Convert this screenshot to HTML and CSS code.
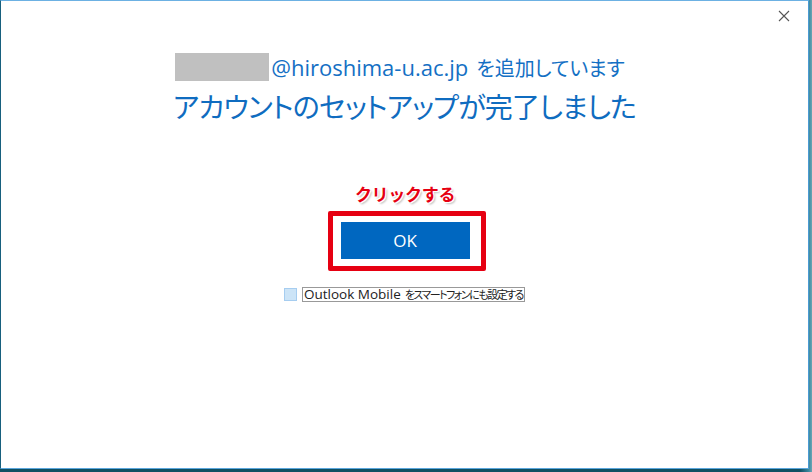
FILE: index.html
```html
<!DOCTYPE html>
<html lang="ja">
<head>
<meta charset="utf-8">
<link rel="stylesheet" href="styles.css">
</head>
<body>
<div class="desktop">
  <div class="window">
    <div class="titlebar">
      <svg class="close" width="12" height="12" viewBox="0 0 12 12"><path d="M1 1 L11 11 M11 1 L1 11" stroke="#555" stroke-width="1.1" fill="none"/></svg>
    </div>
    <div class="content">
      <div class="email-line"><span class="masked"></span><span class="email">@hiroshima-u.ac.jp</span><span class="adding">を追加しています</span></div>
      <h1 class="title">アカウントのセットアップが完了しました</h1>
      <div class="hint">クリックする</div>
      <div class="highlight">
        <button class="ok">OK</button>
      </div>
      <label class="check-row">
        <span class="checkbox"></span>
        <span class="check-label"><span class="cl-latin">Outlook Mobile</span><span class="cl-ja">をスマートフォンにも設定する</span></span>
      </label>
    </div>
  </div>
</div>
</body>
</html>
```

FILE: styles.css
```css
html, body {
  margin: 0;
  padding: 0;
  width: 812px;
  height: 472px;
  overflow: hidden;
}
body {
  background: #0f4f63;
  font-family: "Noto Sans CJK JP", sans-serif;
}
.desktop {
  display: flex;
  width: 812px;
  height: 472px;
  background: linear-gradient(90deg, #0f4f63 0 800px, #3d8aa0 809px, #6ba7b5 812px);
}
.window {
  width: 807px;
  height: 467px;
  background: #fff;
  border-top: 1px solid #6cb1e3;
  border-left: 1px solid #17607e;
  border-right: 1px solid #4b9bd3;
  border-bottom: 1px solid #5aa6dc;
  display: flex;
  flex-direction: column;
}
.titlebar {
  height: 30px;
  display: flex;
  justify-content: flex-end;
  align-items: flex-start;
  padding-right: 18px;
}
.close {
  margin-top: 9px;
}
.content {
  display: flex;
  flex-direction: column;
  align-items: center;
}
.email-line {
  margin-top: 22px;
  display: flex;
  align-items: center;
  height: 28px;
  color: #1470c4;
  font-size: 20px;
  margin-left: -9px;
}
.masked {
  width: 94px;
  height: 28px;
  background: #c0c0c0;
  margin-right: 2px;
}
.email {
  font-family: "Open Sans", "Noto Sans", sans-serif;
  font-size: 22px;
  letter-spacing: 0;
}
.adding {
  margin-left: 8px;
  font-size: 20px;
  font-feature-settings: "palt";
}
.title {
  margin: 5px 0 0 0;
  font-weight: normal;
  font-size: 28px;
  line-height: 40px;
  color: #0f6cc0;
  font-feature-settings: "palt";
  letter-spacing: -0.8px;
}
.hint {
  margin-top: 58px;
  font-size: 17px;
  line-height: 20px;
  font-weight: bold;
  color: #e60012;
  letter-spacing: -0.3px;
  text-shadow: 1px 1px 0 #fff, -1px -1px 0 #fff, 1px -1px 0 #fff, -1px 1px 0 #fff, 2px 2px 2px rgba(0,0,0,0.25);
  margin-left: 1px;
}
.highlight {
  margin-top: 7px;
  margin-left: 4px;
  border: 5px solid #e60012;
  border-radius: 2px;
  padding: 6px 11px 7px 8px;
  display: flex;
}
.ok {
  width: 129px;
  height: 37px;
  border: none;
  background: #0067c0;
  color: #fff;
  font-family: "Open Sans", "Noto Sans", sans-serif;
  font-size: 17px;
  padding: 0;
}
.check-row {
  margin-top: 16px;
  display: flex;
  align-items: center;
  gap: 5px;
  margin-left: 0;
}
.checkbox {
  width: 11px;
  height: 11px;
  background: #cce4f7;
  border: 1px solid #a6cdf0;
}
.check-label {
  display: flex;
  align-items: center;
  gap: 4px;
  border: 1px solid #999;
  padding: 0 1px;
  height: 13px;
  color: #222;
}
.cl-latin {
  font-family: "Open Sans", sans-serif;
  font-size: 13.5px;
  line-height: 13px;
}
.cl-ja {
  font-family: "Noto Sans CJK JP", sans-serif;
  font-size: 11px;
  line-height: 13px;
  font-feature-settings: "palt";
  letter-spacing: -1.5px;
}
```
